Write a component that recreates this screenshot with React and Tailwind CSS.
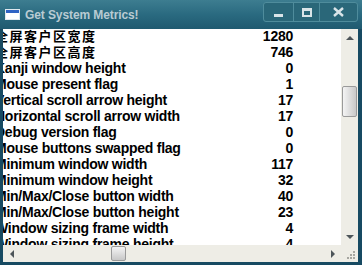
import React from "react";

const rows = [
  { label: "全屏客户区宽度", value: 1280, cjk: true },
  { label: "全屏客户区高度", value: 746, cjk: true },
  { label: "Kanji window height", value: 0 },
  { label: "Mouse present flag", value: 1 },
  { label: "Vertical scroll arrow height", value: 17 },
  { label: "Horizontal scroll arrow width", value: 17 },
  { label: "Debug version flag", value: 0 },
  { label: "Mouse buttons swapped flag", value: 0 },
  { label: "Minimum window width", value: 117 },
  { label: "Minimum window height", value: 32 },
  { label: "Min/Max/Close button width", value: 40 },
  { label: "Min/Max/Close button height", value: 23 },
  { label: "Window sizing frame width", value: 4 },
  { label: "Window sizing frame height", value: 4 },
];

const App = () => {
  return (
    <div className="w-[362px] h-[265px] flex flex-col bg-[#174a62] overflow-hidden font-['Liberation_Sans',sans-serif]">
      {/* Title bar */}
      <div className="h-[29px] shrink-0 flex items-center bg-gradient-to-b from-[#3d7d90] via-[#2a6a80] to-[#1f5a70] pl-[5px] pr-[4px]">
        <div className="w-[15px] h-[11px] bg-white border border-[#dfe8ee] flex flex-col">
          <div className="h-[3px] bg-[#2f63c4]" />
        </div>
        <span className="ml-[5px] text-[12px] font-bold text-[#b9cbd3] tracking-[-0.1px]">Get System Metrics!</span>
        <div className="ml-auto mt-[-5px] flex h-[20px] border border-[#4f8c9c] rounded-[3px] bg-[#2a6779]">
          <div className="w-[30px] flex items-end justify-center pb-[4px] border-r border-[#4f8c9c]">
            <div className="w-[9px] h-[3px] bg-[#d9e4e8]" />
          </div>
          <div className="w-[26px] flex items-center justify-center border-r border-[#4f8c9c]">
            <div className="w-[10px] h-[9px] border-2 border-t-[3px] border-[#d9e4e8]" />
          </div>
          <div className="w-[37px] flex items-center justify-center text-[#d9e4e8]">
            <svg width="11" height="10" viewBox="0 0 11 10">
              <path d="M1 1 L10 9 M10 1 L1 9" stroke="currentColor" strokeWidth="2.4" />
            </svg>
          </div>
        </div>
      </div>
      {/* Frame */}
      <div className="flex-1 min-h-0 flex pl-[3px] pr-[4px] pb-[3px]">
        <div className="flex-1 min-h-0 flex flex-col">
          <div className="flex-1 min-h-0 flex">
            <div className="flex-1 bg-white overflow-hidden">
              <div className="mt-[-1px] ml-[-8px] pr-[48px] flex flex-col">
                {rows.map((row) => (
                  <div key={row.label} className="h-[16px] shrink-0 flex items-center justify-between leading-[16px] text-[14px] font-bold text-black whitespace-nowrap">
                    <span className={row.cjk ? "font-['Noto_Sans_CJK_SC',sans-serif] tracking-[1.5px] text-[13px]" : "tracking-[-0.25px]"}>{row.label}</span>
                    <span className="tracking-[-0.25px]">{row.value}</span>
                  </div>
                ))}
              </div>
            </div>
            {/* Vertical scrollbar */}
            <div className="w-[17px] bg-[#eeede6] flex flex-col items-center">
              <div className="h-[17px] flex items-center justify-center">
                <div className="w-0 h-0 border-l-[4px] border-r-[4px] border-b-[4px] border-l-transparent border-r-transparent border-b-[#4d5559]" />
              </div>
              <div className="mt-[40px] w-[15px] h-[31px] rounded-[2px] border border-[#9a9a9a] bg-gradient-to-r from-[#f4f4f4] via-[#dedede] to-[#c8c8c8]" />
              <div className="flex-1" />
              <div className="h-[17px] flex items-center justify-center">
                <div className="w-0 h-0 border-l-[4px] border-r-[4px] border-t-[4px] border-l-transparent border-r-transparent border-t-[#4d5559]" />
              </div>
            </div>
          </div>
          {/* Horizontal scrollbar */}
          <div className="h-[17px] shrink-0 flex bg-[#eeede6]">
            <div className="flex-1 flex items-center">
              <div className="w-[17px] flex items-center justify-center">
                <div className="w-0 h-0 border-t-[4px] border-b-[4px] border-r-[4px] border-t-transparent border-b-transparent border-r-[#4d5559]" />
              </div>
              <div className="ml-[91px] w-[15px] h-[15px] rounded-[2px] border border-[#9a9a9a] bg-gradient-to-b from-[#f4f4f4] via-[#dedede] to-[#c8c8c8]" />
              <div className="flex-1" />
              <div className="w-[17px] flex items-center justify-center">
                <div className="w-0 h-0 border-t-[4px] border-b-[4px] border-l-[4px] border-t-transparent border-b-transparent border-l-[#4d5559]" />
              </div>
            </div>
            <div className="w-[17px] flex items-end justify-end p-[3px]">
              <svg width="10" height="10" viewBox="0 0 10 10">
                {[[8, 0], [5, 3], [8, 3], [2, 6], [5, 6], [8, 6]].map(([x, y]) => (
                  <rect key={`${x}-${y}`} x={x} y={y + 2} width="2" height="2" fill="#a6a6a0" />
                ))}
              </svg>
            </div>
          </div>
        </div>
      </div>
    </div>
  );
};

export default App;
